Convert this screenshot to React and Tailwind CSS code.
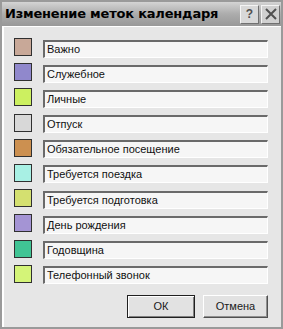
const labels = [
  { name: "Важно", color: "bg-[#c8a898]" },
  { name: "Служебное", color: "bg-[#9088cc]" },
  { name: "Личные", color: "bg-[#ccf060]" },
  { name: "Отпуск", color: "bg-[#d8d8d8]" },
  { name: "Обязательное посещение", color: "bg-[#cc9050]" },
  { name: "Требуется поездка", color: "bg-[#a8f0e4]" },
  { name: "Требуется подготовка", color: "bg-[#d4e070]" },
  { name: "День рождения", color: "bg-[#a494d4]" },
  { name: "Годовщина", color: "bg-[#40c494]" },
  { name: "Телефонный звонок", color: "bg-[#d4f478]" },
];

export default function App() {
  return (
    <div className="w-[283px] h-[329px] bg-[#e6e6e6] border-[2px] border-[#9a9a9a] flex flex-col font-['Liberation_Sans',sans-serif] overflow-hidden">
      {/* title bar */}
      <div className="h-[24px] shrink-0 bg-gradient-to-b from-[#d4d4d4] via-[#acacac] to-[#989898] flex items-center pl-[3px] pr-[1px]">
        <span className="text-[13px] font-bold text-black font-['DejaVu_Sans',sans-serif] tracking-[-0.2px] flex-1">Изменение меток календаря</span>
        <button className="w-[19px] h-[19px] bg-[#d8d8d8] border border-[#f4f4f4] border-r-[#707070] border-b-[#707070] flex items-center justify-center text-[12px] font-bold text-[#505050] mr-[2px]">
          ?
        </button>
        <button className="w-[19px] h-[19px] bg-[#d0d0d0] border border-[#f4f4f4] border-r-[#707070] border-b-[#707070] flex items-center justify-center">
          <svg width="12" height="12" viewBox="0 0 12 12">
            <path d="M1 1 L11 11 M11 1 L1 11" stroke="#505050" strokeWidth="2" />
          </svg>
        </button>
      </div>
      <div className="flex-1 border-l-[2px] border-t border-[#ffffff] flex flex-col">
        <div className="flex flex-col gap-[7.2px] pt-[11px] pl-[10px] pr-[13px]">
          {labels.map((l) => (
            <div key={l.name} className="flex items-center h-[18px]">
              <div className={`w-[18px] h-[18px] border border-[#303030] ${l.color}`} />
              <div className="ml-[11px] flex-1 h-[18px] mt-[3px] bg-[#f6f6f6] border-t-[2px] border-l-[2px] border-[#6a6a6a] border-b border-r border-b-[#ffffff] border-r-[#ffffff] flex items-center pl-[2px]">
                <span className="text-[11px] text-[#101010] leading-none">{l.name}</span>
              </div>
            </div>
          ))}
        </div>
        <div className="flex justify-end gap-[8px] pr-[13px] mt-[12px]">
          <button className="w-[68px] h-[23px] bg-[#e2e2e2] border border-[#202020] shadow-[inset_1px_1px_0_#ffffff,inset_-1px_-1px_0_#808080] text-[11px] text-[#202020]">
            ОК
          </button>
          <button className="w-[65px] h-[23px] bg-[#e2e2e2] border border-[#ffffff] border-r-[#505050] border-b-[#505050] shadow-[inset_-1px_-1px_0_#909090] text-[11px] text-[#202020]">
            Отмена
          </button>
        </div>
      </div>
    </div>
  );
}
